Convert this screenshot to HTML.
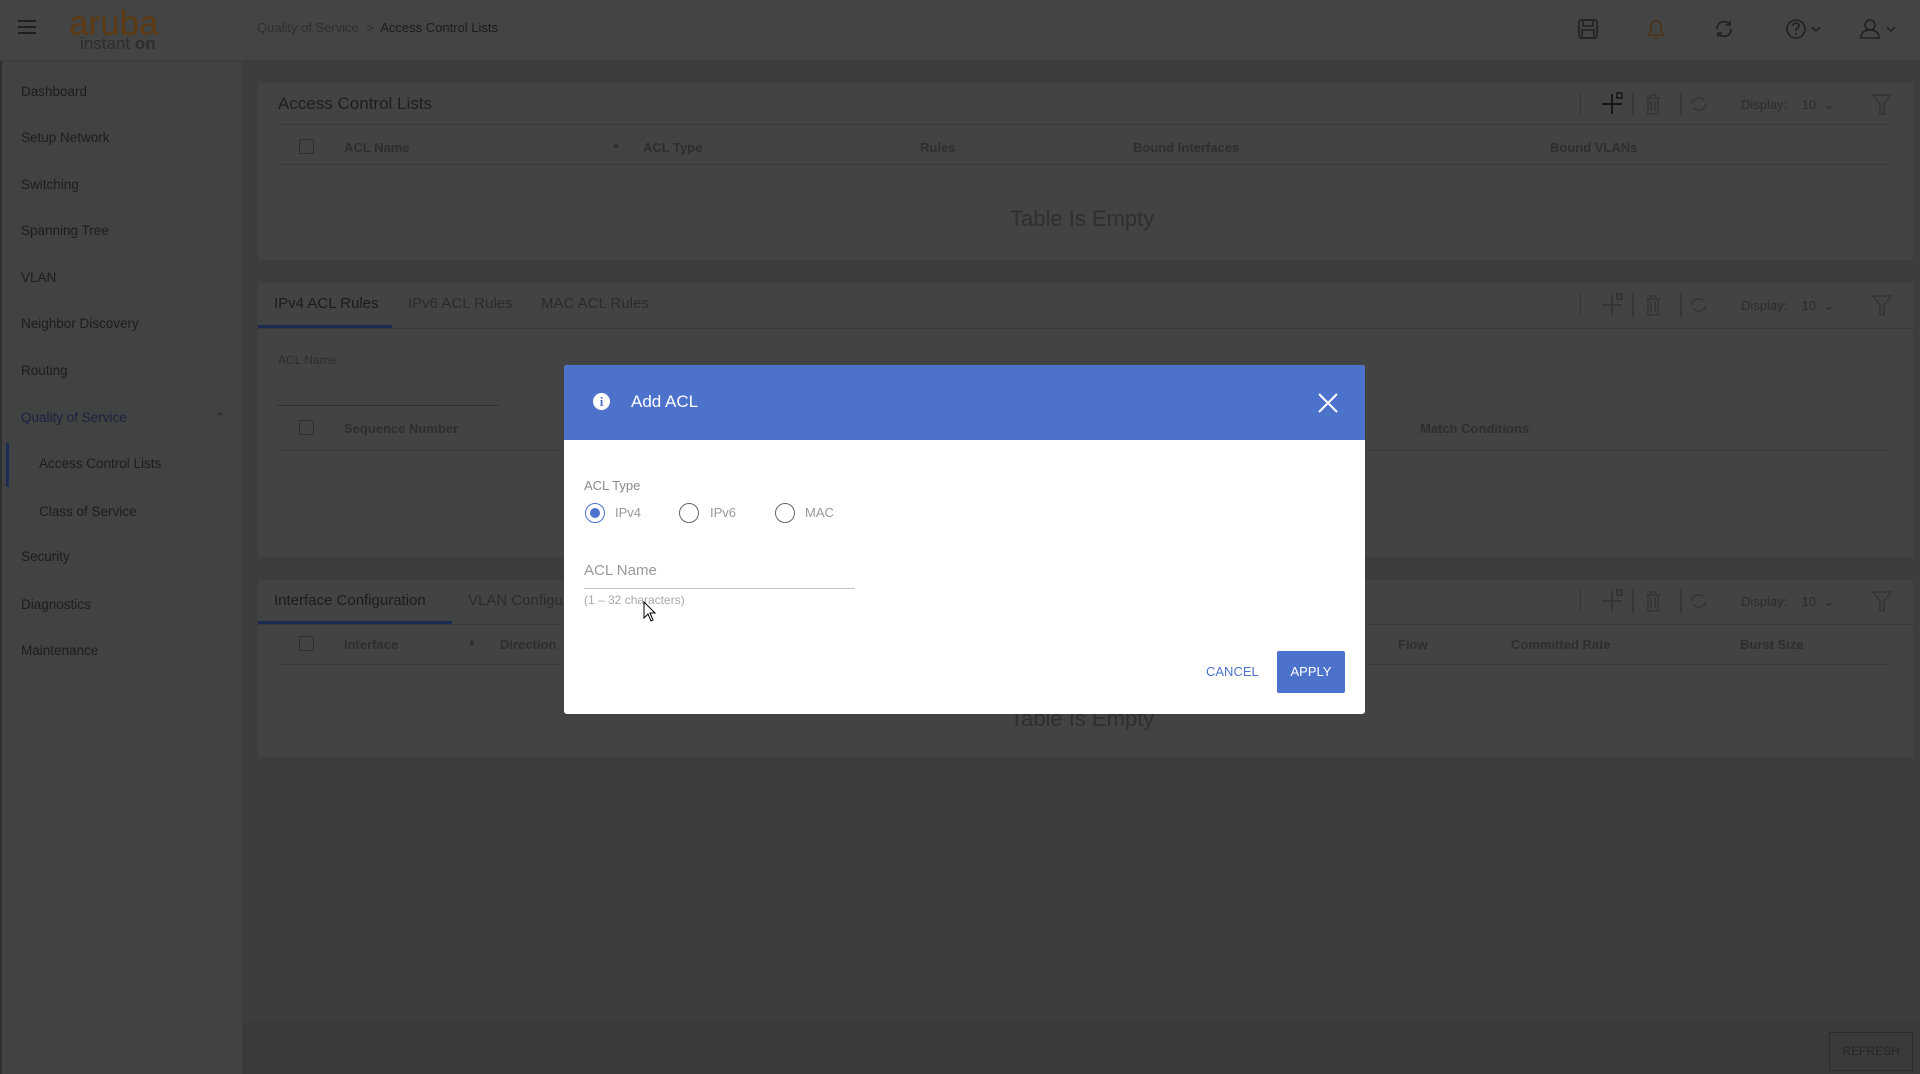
<!DOCTYPE html>
<html><head><meta charset="utf-8"><style>
*{margin:0;padding:0;box-sizing:border-box}
body{width:1920px;height:1074px;overflow:hidden;background:#3c3d3d;font-family:"Liberation Sans",sans-serif;position:relative}
.a{position:absolute;white-space:nowrap}
.hdr{left:0;top:0;width:1920px;height:61px;background:#434444;border-bottom:1px solid #3a3b3b}
.side{left:0;top:61px;width:242px;height:1013px;background:#414242;border-left:2px solid #2e2f2f}
.nav{left:21px;font-size:13.5px;color:#1c1d1d}
.panel{background:#424343;left:258px;width:1655px}
.th{font-size:13px;color:#2d2e2e;font-weight:bold}
.cb{width:15px;height:15px;border:1px solid #2e2f2f;border-radius:2px}
.line{height:1px;background:#3a3b3b}
.tab{font-size:15px;color:#2a2b2b}
</style></head><body>
<div class="a hdr"></div>
<div class="a" style="left:18px;top:20px;width:18px;height:2px;background:#1e1f1f;box-shadow:0 6px 0 #1e1f1f,0 12px 0 #1e1f1f"></div>
<div class="a" style="left:69px;top:4px;font-size:35px;color:#5e3a12;letter-spacing:0px">aruba</div>
<div class="a" style="left:80px;top:34px;font-size:17px;color:#2c2d2d">instant <b>on</b></div>
<div class="a" style="left:257px;top:20px;font-size:13px;color:#2e2f2f">Quality of Service &nbsp;&gt;&nbsp; <span style="color:#1a1b1b">Access Control Lists</span></div>
<svg class="a" style="left:1577px;top:18px" width="22" height="22" fill="none" stroke="#1e1f1f" stroke-width="1.5"><rect x="2" y="2" width="18" height="18" rx="2"/><rect x="6" y="2" width="10" height="6"/><rect x="5" y="12" width="12" height="8"/></svg>
<svg class="a" style="left:1645px;top:17px" width="22" height="24" fill="none" stroke="#4a3314" stroke-width="1.5"><path d="M4 18 Q6 15 6 10 Q6 4 11 4 Q16 4 16 10 Q16 15 18 18 Z M9 20 Q11 23 13 20"/></svg>
<svg class="a" style="left:1713px;top:18px" width="22" height="22" fill="none" stroke="#1e1f1f" stroke-width="1.5"><path d="M4 11 A7 7 0 0 1 17 7 M18 11 A7 7 0 0 1 5 15 M17 3 V7 H13 M5 19 V15 H9"/></svg>
<svg class="a" style="left:1785px;top:18px" width="40" height="22" fill="none" stroke="#1e1f1f" stroke-width="1.5"><circle cx="11" cy="11" r="9"/><path d="M8 8 Q8 5 11 5 Q14 5 14 8 Q14 10 11 11 V13 M11 15 V17"/><path d="M27 9 L31 13 L35 9"/></svg>
<svg class="a" style="left:1858px;top:17px" width="42" height="24" fill="none" stroke="#1e1f1f" stroke-width="1.5"><circle cx="12" cy="8" r="5"/><path d="M3 21 Q3 13 12 13 Q21 13 21 21 Z"/><path d="M29 10 L33 14 L37 10"/></svg>

<div class="a side"></div>
<div class="a nav" style="top:84px">Dashboard</div>
<div class="a nav" style="top:130px">Setup Network</div>
<div class="a nav" style="top:177px">Switching</div>
<div class="a nav" style="top:223px">Spanning Tree</div>
<div class="a nav" style="top:270px">VLAN</div>
<div class="a nav" style="top:316px">Neighbor Discovery</div>
<div class="a nav" style="top:363px">Routing</div>
<div class="a nav" style="top:410px;color:#1a2240">Quality of Service</div>
<div class="a" style="left:216px;top:412px;font-size:10px;color:#1c1d1d">&#8963;</div>
<div class="a" style="left:6px;top:443px;width:3px;height:44px;background:#1d2d55"></div>
<div class="a nav" style="left:39px;top:456px">Access Control Lists</div>
<div class="a nav" style="left:39px;top:504px">Class of Service</div>
<div class="a nav" style="top:549px">Security</div>
<div class="a nav" style="top:597px">Diagnostics</div>
<div class="a nav" style="top:643px">Maintenance</div>

<div class="a panel" style="top:83px;height:177px"></div>
<div class="a" style="left:278px;top:94px;font-size:17px;color:#1d1e1e">Access Control Lists</div>
<div class="a line" style="left:278px;top:124px;width:1612px"></div>
<div class="a cb" style="left:299px;top:139px"></div>
<div class="a th" style="left:344px;top:140px">ACL Name</div>
<div class="a th" style="left:611px;top:140px;font-size:10px">&#9650;</div>
<div class="a th" style="left:643px;top:140px">ACL Type</div>
<div class="a th" style="left:920px;top:140px">Rules</div>
<div class="a th" style="left:1133px;top:140px">Bound Interfaces</div>
<div class="a th" style="left:1550px;top:140px">Bound VLANs</div>
<div class="a line" style="left:278px;top:164px;width:1612px"></div>
<div class="a" style="left:1010px;top:206px;font-size:22px;color:#2e2f2f">Table Is Empty</div>

<div class="a panel" style="top:283px;height:274px"></div>
<div class="a tab" style="left:274px;top:295px;color:#1b1c1c">IPv4 ACL Rules</div>
<div class="a tab" style="left:408px;top:295px">IPv6 ACL Rules</div>
<div class="a tab" style="left:541px;top:295px">MAC ACL Rules</div>
<div class="a" style="left:258px;top:325px;width:134px;height:3px;background:#1a2a52"></div>
<div class="a line" style="left:258px;top:328px;width:1655px"></div>
<div class="a" style="left:278px;top:353px;font-size:12px;color:#2d2e2e">ACL Name</div>
<div class="a line" style="left:278px;top:405px;width:220px;background:#2f3030"></div>
<div class="a cb" style="left:299px;top:420px"></div>
<div class="a th" style="left:344px;top:421px">Sequence Number</div>
<div class="a th" style="left:1420px;top:421px">Match Conditions</div>
<div class="a line" style="left:278px;top:450px;width:1612px"></div>

<div class="a panel" style="top:580px;height:177px"></div>
<div class="a tab" style="left:274px;top:592px;color:#1b1c1c">Interface Configuration</div>
<div class="a tab" style="left:468px;top:592px">VLAN Configuration</div>
<div class="a" style="left:258px;top:621px;width:194px;height:3px;background:#1a2a52"></div>
<div class="a line" style="left:258px;top:624px;width:1655px"></div>
<div class="a cb" style="left:299px;top:636px"></div>
<div class="a th" style="left:344px;top:637px">Interface</div>
<div class="a th" style="left:467px;top:637px;font-size:10px">&#9650;</div>
<div class="a th" style="left:500px;top:637px">Direction</div>
<div class="a th" style="left:1398px;top:637px">Flow</div>
<div class="a th" style="left:1511px;top:637px">Committed Rate</div>
<div class="a th" style="left:1740px;top:637px">Burst Size</div>
<div class="a line" style="left:278px;top:664px;width:1612px"></div>
<div class="a" style="left:1010px;top:706px;font-size:22px;color:#2e2f2f">Table Is Empty</div>

<div class="a" style="left:242px;top:1022px;width:1678px;height:52px;background:#393a3a"></div>
<div class="a" style="left:1829px;top:1032px;width:84px;height:39px;border:1px solid #2a2b2b;font-size:12px;color:#252626;text-align:center;line-height:37px">REFRESH</div>

<svg class="a" style="left:1580px;top:90px" width="320" height="640" fill="none" stroke="#333434" stroke-width="1.5">
<defs><g id="t"><line x1="0" y1="2" x2="0" y2="26"/><line x1="53" y1="2" x2="53" y2="26"/><path d="M66 8 H80 M70 8 V5 H76 V8 M68 8 V24 H78 V8 M71 11 V21 M75 11 V21"/><line x1="101" y1="2" x2="101" y2="26"/><path d="M112 14 A7 7 0 0 1 124 10 M126 14 A7 7 0 0 1 114 18"/><path d="M293 5 H311 L304 14 V24 H300 V14 Z"/></g></defs>
<use href="#t"/><use href="#t" y="201"/><use href="#t" y="497"/>
<path d="M22 14 H42 M32 4 V24" stroke="#151616" stroke-width="2"/><rect x="37" y="3" width="5" height="5" stroke="#151616"/>
<g stroke="#303131"><path d="M22 215 H42 M32 205 V225"/><rect x="37" y="204" width="5" height="5"/><path d="M22 511 H42 M32 501 V521"/><rect x="37" y="500" width="5" height="5"/></g>
</svg>
<div class="a" style="left:1741px;top:97px;font-size:13px;color:#2b2c2c">Display: &nbsp;&nbsp;&nbsp;10 &nbsp;&#8964;</div>
<div class="a" style="left:1741px;top:298px;font-size:13px;color:#2b2c2c">Display: &nbsp;&nbsp;&nbsp;10 &nbsp;&#8964;</div>
<div class="a" style="left:1741px;top:594px;font-size:13px;color:#2b2c2c">Display: &nbsp;&nbsp;&nbsp;10 &nbsp;&#8964;</div>

<div class="a" style="left:564px;top:365px;width:801px;height:349px;background:#fff;border-radius:3px;overflow:hidden">
 <div style="height:75px;background:#4d72cc;position:relative">
  <div class="a" style="left:29px;top:28px;width:17px;height:17px;border-radius:50%;background:#fff;color:#4d72cc;font-weight:bold;font-size:13px;text-align:center;line-height:17px;font-family:'Liberation Serif',serif">i</div>
  <div class="a" style="left:67px;top:27px;font-size:17px;color:#fff">Add ACL</div>
  <svg class="a" style="left:753px;top:27px" width="22" height="22" stroke="#fff" stroke-width="2"><path d="M2 2 L20 20 M20 2 L2 20"/></svg>
 </div>
 <div class="a" style="left:20px;top:113px;font-size:13px;color:#8a8a8a">ACL Type</div>
 <div class="a" style="left:21px;top:138px;width:20px;height:20px;border:1.5px solid #4d72cc;border-radius:50%"><div style="margin:3.5px;width:10px;height:10px;border-radius:50%;background:#4d72cc"></div></div>
 <div class="a" style="left:51px;top:140px;font-size:13px;color:#999">IPv4</div>
 <div class="a" style="left:115px;top:138px;width:20px;height:20px;border:1.5px solid #666;border-radius:50%"></div>
 <div class="a" style="left:146px;top:140px;font-size:13px;color:#999">IPv6</div>
 <div class="a" style="left:211px;top:138px;width:20px;height:20px;border:1.5px solid #666;border-radius:50%"></div>
 <div class="a" style="left:241px;top:140px;font-size:13px;color:#999">MAC</div>
 <div class="a" style="left:20px;top:197px;font-size:15px;color:#999">ACL Name</div>
 <div class="a" style="left:20px;top:223px;width:271px;height:1px;background:#c4c4c4"></div>
 <div class="a" style="left:20px;top:228px;font-size:12px;color:#aaa">(1 – 32 characters)</div>
 <div class="a" style="left:642px;top:299px;font-size:13px;color:#4d72cc">CANCEL</div>
 <div class="a" style="left:713px;top:286px;width:68px;height:42px;background:#4d72cc;color:#fff;font-size:13px;text-align:center;line-height:42px;border-radius:2px">APPLY</div>
 <svg class="a" style="left:78px;top:236px" width="14" height="22"><path d="M2 1 V17 L6 13 L9 20 L11 19 L8 12 H13 Z" fill="#fff" stroke="#000" stroke-width="1"/></svg>
</div>
</body></html>
